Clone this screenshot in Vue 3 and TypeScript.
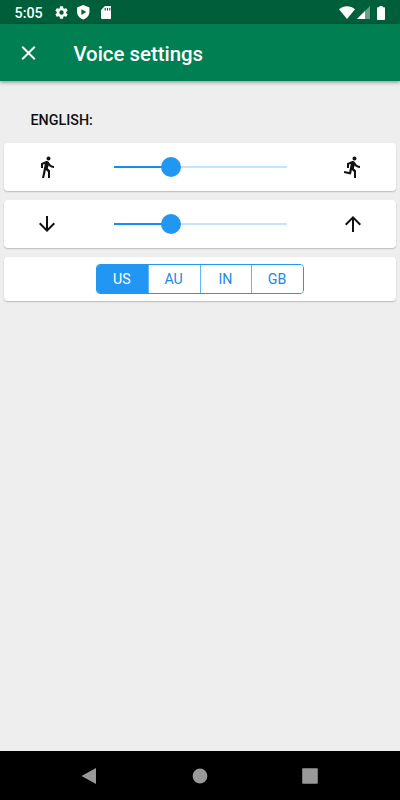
<script setup lang="ts">
import { ref } from 'vue'

interface SliderRow {
  id: string
  value: number
  low: string
  high: string
}

const sliders: SliderRow[] = [
  {
    id: 'speed',
    value: 33,
    low: 'M13.5 5.5c1.1 0 2-.9 2-2s-.9-2-2-2-2 .9-2 2 .9 2 2 2zM9.8 8.9L7 23h2.1l1.8-8 2.1 2v6h2v-7.5l-2.1-2 .6-3C14.8 12 16.8 13 19 13v-2c-1.9 0-3.5-1-4.3-2.4l-1-1.6c-.4-.6-1-1-1.7-1-.3 0-.5.1-.8.1L6 8.3V13h2V9.6l1.8-.7',
    high: 'M13.49 5.48c1.1 0 2-.9 2-2s-.9-2-2-2-2 .9-2 2 .9 2 2 2zm-3.6 13.9l1-4.4 2.1 2v6h2v-7.5l-2.1-2 .6-3c1.3 1.5 3.3 2.5 5.5 2.5v-2c-1.9 0-3.5-1-4.3-2.4l-1-1.6c-.4-.6-1-1-1.7-1-.3 0-.5.1-.8.1l-5.2 2.2v4.7h2v-3.4l1.8-.7-1.6 8.1-4.9-1-.4 2 7 1.4z',
  },
  {
    id: 'pitch',
    value: 33,
    low: 'M20 12l-1.41-1.41L13 16.17V4h-2v12.17l-5.58-5.59L4 12l8 8 8-8z',
    high: 'M4 12l1.41 1.41L11 7.83V20h2V7.83l5.58 5.59L20 12l-8-8-8 8z',
  },
]

const regions = ['US', 'AU', 'IN', 'GB']
const selected = ref('US')
</script>

<template>
  <div class="screen">
    <div class="status">
      <span class="clock">5:05</span>
      <svg class="gear" viewBox="0 0 24 24"><path d="M19.43 12.98c.04-.32.07-.64.07-.98s-.03-.66-.07-.98l2.11-1.65c.19-.15.24-.42.12-.64l-2-3.46c-.12-.22-.39-.3-.61-.22l-2.49 1c-.52-.4-1.08-.73-1.69-.98l-.38-2.65C14.46 2.18 14.25 2 14 2h-4c-.25 0-.46.18-.49.42l-.38 2.65c-.61.25-1.17.59-1.69.98l-2.49-1c-.23-.09-.49 0-.61.22l-2 3.46c-.13.22-.07.49.12.64l2.11 1.65c-.04.32-.07.65-.07.98s.03.66.07.98l-2.11 1.65c-.19.15-.24.42-.12.64l2 3.46c.12.22.39.3.61.22l2.49-1c.52.4 1.08.73 1.69.98l.38 2.65c.03.24.24.42.49.42h4c.25 0 .46-.18.49-.42l.38-2.65c.61-.25 1.17-.59 1.69-.98l2.49 1c.23.09.49 0 .61-.22l2-3.46c.12-.22.07-.49-.12-.64l-2.11-1.65zM12 15.5a3.5 3.5 0 1 1 0-7 3.5 3.5 0 0 1 0 7z" /></svg>
      <svg class="shield" viewBox="0 0 12 14"><path fill-rule="evenodd" d="M6 0l6 2.3v4.2c0 3.4-2.4 6.3-6 7.5-3.6-1.2-6-4.1-6-7.500V2.300zM4.200 4v5.600L8.900 6.800z" /></svg>
      <svg class="sd" viewBox="0 0 16 20"><path fill-rule="evenodd" d="M14 0H6L0 6v12c0 1.100.9 2 2 2h12c1.100 0 2-.9 2-2V2c0-1.100-.9-2-2-2zM5.500 3h1.800v4H5.500zM9 3h1.800v4H9zM12.500 3h1.800v4h-1.800z" /></svg>
      <span class="spacer"></span>
      <svg class="wifi" viewBox="0 0 16 13"><path d="M0 3.200C4.500-.8 11.500-.8 16 3.200L8 13z" /></svg>
      <svg class="cell" viewBox="0 0 13 13"><path opacity=".4" d="M13 0v13H0z" /><path d="M8 5v8H0z" /></svg>
      <svg class="battery" viewBox="0 0 8 14"><path d="M2.300 0h3.400v1.300H7c.6 0 1 .4 1 1V13c0 .6-.4 1-1 1H1c-.6 0-1-.4-1-1V2.300c0-.6.4-1 1-1h1.300z" /></svg>
    </div>

    <header class="appbar">
      <svg class="close" viewBox="0 0 24 24"><path d="M19 6.410L17.590 5 12 10.590 6.410 5 5 6.410 10.590 12 5 17.590 6.410 19 12 13.410 17.590 19 19 17.590 13.410 12z" /></svg>
      <h1>Voice settings</h1>
    </header>

    <main>
      <h2>ENGLISH:</h2>
      <section v-for="s in sliders" :key="s.id" class="card slider-card">
        <svg class="icon" viewBox="0 0 24 24"><path :d="s.low" /></svg>
        <div class="track">
          <div class="fill" :style="{ width: s.value + '%' }"><span class="thumb"></span></div>
        </div>
        <svg class="icon" viewBox="0 0 24 24"><path :d="s.high" /></svg>
      </section>
      <section class="card region-card">
        <div class="segments">
          <button v-for="r in regions" :key="r" :class="{ active: r === selected }" @click="selected = r">{{ r }}</button>
        </div>
      </section>
    </main>

    <nav class="navbar">
      <svg viewBox="0 0 18 18"><path d="M16 1v16L1.500 9z" /></svg>
      <svg viewBox="0 0 18 18"><circle cx="9" cy="9" r="7.400" /></svg>
      <svg viewBox="0 0 18 18"><rect x="1.200" y="1.200" width="15.600" height="15.600" rx="1" /></svg>
    </nav>
  </div>
</template>

<style>
body {
  margin: 0;
}
</style>

<style scoped>
.screen {
  display: flex;
  flex-direction: column;
  width: 400px;
  height: 800px;
  overflow: hidden;
  background: #eee;
  font-family: Roboto, sans-serif;
}
svg {
  display: block;
  flex: none;
}
.status {
  display: flex;
  align-items: center;
  flex: none;
  box-sizing: border-box;
  height: 24px;
  padding: 1px 15px 0 14.500px;
  background: #005f3b;
  color: #fff;
  fill: #fff;
}
.clock {
  width: 39px;
  padding-top: 1px;
  font-size: 14.300px;
  font-weight: 500;
  line-height: 23px;
}
.gear { width: 15px; height: 15px; }
.shield { width: 12.500px; height: 14.500px; margin-left: 8.500px; }
.sd { width: 10.500px; height: 13px; margin-left: 11px; }
.spacer { flex: 1; }
.wifi { width: 16px; height: 13px; }
.cell { width: 13px; height: 13px; margin-left: 2px; }
.battery { width: 8px; height: 14px; margin-left: 7px; }
.appbar {
  display: flex;
  align-items: center;
  flex: none;
  height: 57px;
  background: #008052;
  box-shadow: 0 1px 4px rgba(0, 0, 0, 0.45);
  color: #fff;
}
.close {
  width: 25px;
  height: 24px;
  margin-left: 16px;
  fill: #fff;
}
h1 {
  margin: 2px 0 0 32.400px;
  font-size: 20.400px;
  font-weight: 500;
  line-height: 28px;
}
main {
  flex: 1;
  padding: 29px 4px 0;
}
h2 {
  margin: 0 0 13px 26.500px;
  color: #111;
  font-size: 14.300px;
  font-weight: 500;
  line-height: 20px;
}
.card {
  display: flex;
  align-items: center;
  background: #fff;
  border-radius: 4px;
  box-shadow: 0 1px 1.500px rgba(0, 0, 0, 0.22);
  margin-bottom: 9px;
}
.slider-card {
  box-sizing: border-box;
  height: 48px;
  padding: 0 30.700px 0 30.500px;
  justify-content: space-between;
}
.icon {
  width: 24px;
  height: 24px;
  fill: #111;
}
.track {
  width: 173px;
  height: 2px;
  margin-left: 1px;
  background: #c4e3fc;
}
.fill {
  display: flex;
  align-items: center;
  justify-content: flex-end;
  height: 2px;
  background: #1190f3;
}
.thumb {
  flex: none;
  width: 20.500px;
  height: 20.500px;
  margin-right: -10.400px;
  border-radius: 50%;
  background: #2196f3;
}
.region-card {
  height: 44px;
  justify-content: center;
}
.segments {
  display: flex;
  box-sizing: border-box;
  width: 208px;
  height: 30px;
  border: 1px solid #2196f3;
  border-radius: 4px;
  overflow: hidden;
}
.segments button {
  flex: 1;
  margin: 0;
  padding: 0 1px 0 0;
  border: 0;
  border-left: 1px solid #64b5f6;
  background: #fff;
  color: #2188e5;
  font: 400 14.200px Roboto, sans-serif;
}
.segments button:first-child {
  border-left: 0;
}
.segments .active {
  background: #2196f3;
  color: #fff;
}
.navbar {
  display: flex;
  flex: none;
  align-items: center;
  justify-content: space-between;
  box-sizing: border-box;
  height: 49px;
  padding: 0 81px 0 80px;
  background: #000;
  fill: #999;
}
.navbar svg {
  width: 18px;
  height: 18px;
}
</style>
